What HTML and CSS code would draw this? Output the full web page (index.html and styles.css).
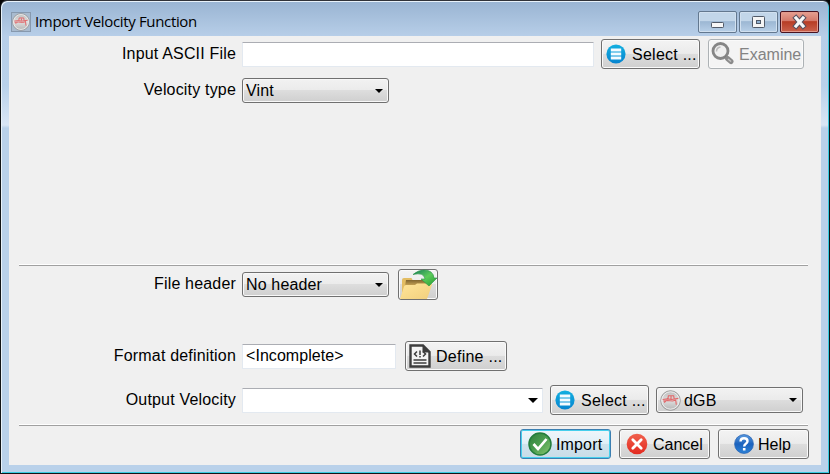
FILE: index.html
```
<!DOCTYPE html>
<html lang="en">
<head>
<meta charset="utf-8">
<title>Import Velocity Function</title>
<link rel="stylesheet" href="styles.css">
</head>
<body>
<svg width="0" height="0" class="defs" aria-hidden="true">
  <defs>
    <linearGradient id="silver" x1="0" y1="0" x2="0" y2="1"><stop offset="0" stop-color="#bdbdbd"/><stop offset=".5" stop-color="#dedede"/><stop offset="1" stop-color="#b4b4b4"/></linearGradient>
    <linearGradient id="blue" x1="0" y1="0" x2="0" y2="1"><stop offset="0" stop-color="#14b0e0"/><stop offset="1" stop-color="#0583cf"/></linearGradient>
    <linearGradient id="green" x1="0" y1="0" x2="1" y2="1"><stop offset="0" stop-color="#2d7e3c"/><stop offset=".5" stop-color="#4b9e50"/><stop offset="1" stop-color="#8bc972"/></linearGradient>
    <linearGradient id="red" x1="0" y1="0" x2="0" y2="1"><stop offset="0" stop-color="#f0604c"/><stop offset="1" stop-color="#e32a20"/></linearGradient>
    <linearGradient id="help" x1="0" y1="0" x2="0" y2="1"><stop offset="0" stop-color="#5b9be0"/><stop offset=".5" stop-color="#1b62bd"/><stop offset="1" stop-color="#2c82d8"/></linearGradient>
    <linearGradient id="folder" x1="0" y1="0" x2="1" y2="1"><stop offset="0" stop-color="#ffe59a"/><stop offset="1" stop-color="#f1cf7c"/></linearGradient>
    <linearGradient id="back" x1="0" y1="0" x2="0" y2="1"><stop offset="0" stop-color="#80652f"/><stop offset="1" stop-color="#cfaa58"/></linearGradient>
    <linearGradient id="arrow" x1="0" y1="0" x2="1" y2="1"><stop offset="0" stop-color="#137a5a"/><stop offset=".5" stop-color="#5ccb5a"/><stop offset="1" stop-color="#229b2e"/></linearGradient>
    <symbol id="logo" viewBox="0 0 20 20">
      <circle cx="10" cy="10" r="9.3" fill="url(#silver)" stroke="#969696" stroke-width=".9"/>
      <circle cx="10" cy="10" r="8.3" fill="none" stroke="#f0f0f0" stroke-width=".9"/>
      <path d="M2.500 9 7 8.500 11 9 17.500 8M3 10.500 7 10 12 10.500 15.500 9.500M7.500 8.500 8 5.500H13L13.500 8.500M10.500 6V8.500M15 9.500 15.500 14M5.500 10.500 4 12" fill="none" stroke="#e2686a" stroke-width="1.100"/>
    </symbol>
    <symbol id="list" viewBox="0 0 20 20">
      <circle cx="10" cy="10" r="9.6" fill="url(#blue)"/>
      <path d="M4.800 6h10.400M4.800 10h10.400M4.800 14h10.400" stroke="#f4fbff" stroke-width="2.800"/>
    </symbol>
  </defs>
</svg>
<div class="window">
  <header class="titlebar">
    <span class="app-icon"><svg width="18" height="18"><use href="#logo"/></svg></span>
    <h1>Import Velocity Function</h1>
    <div class="controls">
      <span class="control"><svg width="37" height="20"><rect x="12.5" y="10.5" width="12" height="5" rx=".8" fill="#f7f7f7" stroke="#515a68"/></svg></span>
      <span class="control"><svg width="37" height="20"><rect x="12.5" y="4.500" width="12" height="11" rx=".8" fill="#f5f5f5" stroke="#515a68"/><rect x="16.500" y="8.500" width="4" height="3" fill="#91b1d0" stroke="#515a68"/></svg></span>
      <span class="control close"><svg width="37" height="20"><path d="M15 6 22 14M22 6 15 14" stroke="#55505f" stroke-width="5.200" stroke-linecap="square"/><path d="M15 6 22 14M22 6 15 14" stroke="#f7f7f7" stroke-width="3.200" stroke-linecap="square"/></svg></span>
    </div>
  </header>
  <main class="content">
    <div class="row row-input">
      <label>Input ASCII File</label>
      <div class="field file-field"></div>
      <div class="button select-button"><svg width="20" height="20"><use href="#list"/></svg><span>Select ...</span></div>
      <div class="button examine disabled">
        <svg width="24" height="24" viewBox="0 0 24 24"><circle cx="10.500" cy="9" r="7.500" fill="#efefef" stroke="#858585" stroke-width="2.800"/><path d="M6.500 9.500Q6.500 5.500 10.500 5" fill="none" stroke="#bbb" stroke-width="1.500"/><path d="M15 14.500 18 16.500" stroke="#777" stroke-width="2.500"/><path d="M17.500 16.500 21 19.500" stroke="#8b8b8b" stroke-width="5" stroke-linecap="round"/><path d="M18 17 21 19.500" stroke="#c4c4c4" stroke-width="1.500"/></svg>
        <span>Examine</span>
      </div>
    </div>
    <div class="row row-type">
      <label>Velocity type</label>
      <div class="combo"><span>Vint</span><i class="caret"></i></div>
    </div>
    <div class="separator upper"></div>
    <div class="row row-header">
      <label>File header</label>
      <div class="combo"><span>No header</span><i class="caret"></i></div>
      <div class="button folder-button">
        <svg width="40" height="31" viewBox="0 0 40 31"><path d="M4 28V11Q4 9 6 9H13Q14 9 14.500 11H29V28Z" fill="#e3bd63"/><path d="M8 11H28V17H7Z" fill="url(#back)"/><path d="M2 30 6 17.500Q6.500 16 8 16H17L19 14.500H33Q34.500 14.500 34 16L29 30Z" fill="url(#folder)"/><path d="M15 5.500Q20 1 26 1 35 1 36 9H39L31 17 23 10H27Q26 3 15 5.500Z" fill="url(#arrow)" stroke="#269044" stroke-width=".6"/></svg>
      </div>
    </div>
    <div class="row row-format">
      <label>Format definition</label>
      <div class="field format-field">&lt;Incomplete&gt;</div>
      <div class="button define-button">
        <svg width="22" height="24" viewBox="0 0 22 24"><path d="M1.500 1.500H14L20.500 8V22.500H1.500Z" fill="#f4f4f4" stroke="#3d3d3d" stroke-width="2.400"/><path d="M13.500 1V8.500H21Z" fill="#3d3d3d"/><path d="M8 7.500 5.500 10 8 12.500M14 7.500 16.500 10 14 12.500M11 6.500V11M11 12V13.500" fill="none" stroke="#3d3d3d" stroke-width="1.500"/><path d="M4.500 16H17.500M4.500 19H17.500" stroke="#3d3d3d" stroke-width="1.600"/></svg>
        <span>Define ...</span>
      </div>
    </div>
    <div class="row row-output">
      <label>Output Velocity</label>
      <div class="field output-field"><i class="caret"></i></div>
      <div class="button select-button"><svg width="20" height="20"><use href="#list"/></svg><span>Select ...</span></div>
      <div class="combo source"><svg width="21" height="21"><use href="#logo"/></svg><span>dGB</span><i class="caret"></i></div>
    </div>
    <div class="separator lower"></div>
    <footer class="actions">
      <div class="button action import">
        <svg width="24" height="24" viewBox="0 0 24 24"><circle cx="12" cy="12" r="11" fill="url(#green)" stroke="#237d3c" stroke-width="1.500"/><path d="M5.500 12 10 17 18.500 7" fill="none" stroke="#fff" stroke-width="2.700"/></svg>
        <span>Import</span>
      </div>
      <div class="button action cancel">
        <svg width="22" height="22" viewBox="0 0 22 22"><circle cx="11" cy="11" r="10.300" fill="url(#red)"/><path d="M6.800 6.800 15.200 15.200M15.200 6.800 6.800 15.200" stroke="#fff" stroke-width="2.800" stroke-linecap="round"/></svg>
        <span>Cancel</span>
      </div>
      <div class="button action help">
        <svg width="20" height="20" viewBox="0 0 20 20"><circle cx="10" cy="10" r="9.400" fill="url(#help)" stroke="#2a65b4" stroke-width=".8"/><path d="M6.500 7.500Q6.600 4.300 10 4.300 13.500 4.300 13.500 7.200 13.500 8.700 11.600 9.900 10.200 10.800 10.200 12.500" fill="none" stroke="#fff" stroke-width="2.400"/><rect x="8.900" y="14" width="2.600" height="2.500" fill="#fff"/></svg>
        <span>Help</span>
      </div>
    </footer>
  </main>
</div>
</body>
</html>
```
FILE: styles.css
```
* { box-sizing: border-box; }
html { background: #050505; }
body { margin: 0; overflow: hidden; font: 16px/20px "Liberation Sans", Arial, sans-serif; color: #000; }
svg { display: block; flex: none; }
.defs { position: absolute; }
.window {
  width: 830px;
  height: 474px;
  border: 1px solid #111417;
  border-top-color: #303238;
  border-radius: 7px 7px 0 0;
  padding: 0 7px 7px 8px;
  background: linear-gradient(#99b4d2 0, #b7cee8 35px, #b9d1ea 85px, #d9e6f5 124px, #b9d1ea 127px);
  box-shadow: inset 1px 1px #e8f2fa, inset -1px -1px #38cbe0;
}
.titlebar { display: flex; height: 35px; margin-left: -1px; padding: 0 3px; }
.app-icon { display: grid; place-items: center; width: 20px; height: 20px; margin-top: 11px; border: 1px solid #8799ae; background: #a9bbcf; }
h1 { margin: 10px 0 0 4px; font: 15px/20px "Open Sans", "Noto Sans", sans-serif; letter-spacing: -.35px; white-space: nowrap; }
.controls { display: flex; gap: 2px; height: 22px; margin: 10px 0 0 auto; }
.control { width: 39px; height: 22px; border: 1px solid #63788f; border-radius: 2px; background: linear-gradient(#c2d6e9 0 45%, #9cb7d3 48%, #b8d0e8); box-shadow: inset 0 0 0 1px #d1e0ef; }
.close { border-color: #481321; background: linear-gradient(#e6a092, #d47869 45%, #b73c25 48%, #cb624d); box-shadow: inset 0 0 0 1px #e29a8d; }
.content { display: flex; flex-direction: column; width: 812px; height: 429px; padding-top: 3px; background: #f0f0f0; }
.row { display: flex; align-items: center; flex: none; height: 30px; }
label { width: 227px; margin-right: 6px; padding-bottom: 1px; text-align: right; letter-spacing: .18px; white-space: nowrap; }
.field { display: flex; align-items: center; height: 25px; border: 1px solid #e3e9f0; border-top-color: #abadb3; border-radius: 1px; background: #fff; padding-left: 3px; }
.file-field { width: 352px; }
.format-field { width: 154px; letter-spacing: .05px; }
.output-field { width: 301px; }
.button { display: flex; align-items: center; flex: none; height: 30px; border: 1px solid #707070; border-radius: 3px; background: linear-gradient(#f3f3f3, #ebebeb 48%, #dddddd 50%, #cfcfcf); box-shadow: inset 0 0 0 1px #fafafa; white-space: nowrap; }
.select-button { width: 99px; margin-left: 7px; padding-left: 4px; gap: 6px; }
.select-button span, .define-button span { letter-spacing: .25px; }
.examine { width: 96px; margin-left: 8px; padding-left: 1px; gap: 5px; }
.disabled { color: #838383; border-color: #adb2b5; background: #f4f4f4; }
.disabled span { padding-top: 2px; }
.combo { display: flex; align-items: center; width: 147px; height: 25px; padding-left: 3px; border: 1px solid #707070; border-radius: 3px; background: linear-gradient(#f2f2f2, #ebebeb 48%, #dddddd 50%, #cfcfcf); box-shadow: inset 0 0 0 1px #f8f8f8; }
.combo span { letter-spacing: .15px; }
.caret { width: 0; height: 0; margin-left: auto; margin-right: 5px; border: solid transparent; border-width: 4px 4px 0; border-top-color: #000; }
.output-field .caret { margin-right: 4px; border-width: 5px 5px 0; }
.row-type { height: 25px; margin-top: 9px; }
.separator { flex: none; width: 789px; height: 2px; margin-left: 10px; border-top: 1px solid #fff; border-bottom: 1px solid #a0a0a0; }
.upper { margin-top: 161px; }
.row-header { height: 31px; margin-top: 3px; }
.folder-button { width: 40px; height: 31px; margin-left: 9px; }
.folder-button svg { margin: -1px; }
.row-format { margin-top: 41px; }
.define-button { width: 102px; margin-left: 9px; padding-left: 3px; gap: 5px; }
.define-button span, .select-button span { padding-top: 1px; }
.row-output { margin-top: 14px; }
.source { height: 26px; margin-left: 7px; gap: 3px; }
.source span { padding-top: 1px; }
.lower { margin-top: 9px; }
.actions { display: flex; flex: none; margin: 3px 0 0 511px; gap: 8px; }
.action { width: 91px; }
.action span { padding-top: 1px; }
.import { padding-left: 7px; gap: 4px; border-color: #3c7fb1; background: linear-gradient(#eff6fa, #e1eff7 48%, #cfe3ed 50%, #c9dce7); box-shadow: inset 0 0 0 1px #46cfed; }
.import span { letter-spacing: .15px; }
.cancel { padding-left: 6px; gap: 5px; }
.help { padding-left: 15px; gap: 4px; }
```
